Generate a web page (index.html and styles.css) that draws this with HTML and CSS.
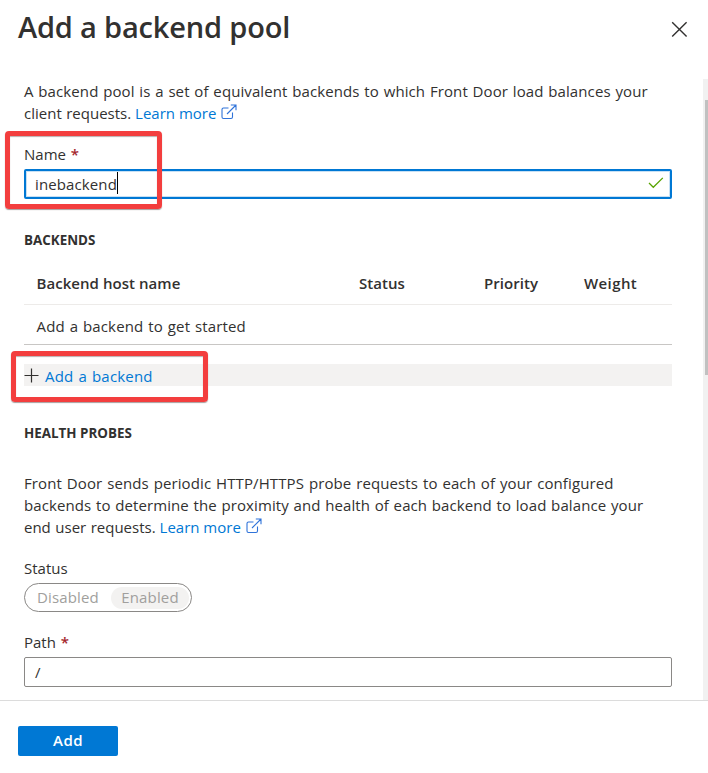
FILE: index.html
```html
<!DOCTYPE html>
<html lang="en">
<head>
<meta charset="utf-8">
<title>Add a backend pool</title>
<link rel="stylesheet" href="styles.css">
</head>
<body>
<div class="panel">
  <header class="header">
    <h1 class="title">Add a backend pool</h1>
    <svg class="close" width="17" height="17" viewBox="0 0 17 17"><path d="M1.2 1.2L15.6 15.6M15.6 1.2L1.2 15.6"/></svg>
  </header>
  <main class="body">
    <div class="content">
      <p class="text intro"><span class="l1">A backend pool is a set of equivalent backends to which Front Door load balances your</span><br><span class="l2">client requests.</span> <a class="link">Learn more<svg class="ext" width="16" height="16" viewBox="0 0 16 16"><path d="M7.500 4H2.500Q1 4 1 5.500V13Q1 14.500 2.500 14.500H10Q11.500 14.500 11.500 13V8.500M6 10L15 1M9.800 1H15V6.200"/></svg></a></p>
      <div class="field name-field">
        <label class="label">Name <span class="req">*</span></label>
        <div class="input focused"><span class="value name-value">inebackend</span><i class="caret"></i><svg class="check" width="16" height="12" viewBox="0 0 16 12"><path d="M1 6L5.300 10.300L14.800 .9"/></svg></div>
        <div class="callout callout-name"></div>
      </div>
      <h2 class="section backends">BACKENDS</h2>
      <div class="table">
        <div class="row head"><span>Backend host name</span><span>Status</span><span>Priority</span><span class="c-weight">Weight</span></div>
        <div class="row empty"><span class="c-empty">Add a backend to get started</span></div>
      </div>
      <div class="add-row">
        <svg class="plus" width="15" height="15" viewBox="0 0 15 15"><path d="M7.500 .5V14.500M.5 7.500H14.500"/></svg><a class="link add-link">Add a backend</a>
        <div class="callout callout-add"></div>
      </div>
      <h2 class="section probes">HEALTH PROBES</h2>
      <p class="text probe-text"><span class="p1">Front Door sends periodic HTTP/HTTPS probe requests to each of your configured</span><br><span class="p2">backends to determine the proximity and health of each backend to load balance your</span><br><span class="l2">end user requests.</span> <a class="link">Learn more<svg class="ext" width="16" height="16" viewBox="0 0 16 16"><path d="M7.500 4H2.500Q1 4 1 5.500V13Q1 14.500 2.500 14.500H10Q11.500 14.500 11.500 13V8.500M6 10L15 1M9.800 1H15V6.200"/></svg></a></p>
      <label class="label status-label">Status</label>
      <div class="toggle"><span class="opt">Disabled</span><span class="opt on">Enabled</span></div>
      <label class="label path-label">Path <span class="req">*</span></label>
      <div class="input path-input"><span class="value">/</span></div>
    </div>
    <div class="scrollbar"><div class="thumb"></div></div>
  </main>
  <footer class="footer"><button class="btn">Add</button></footer>
</div>
</body>
</html>
```

FILE: styles.css
```css
* { box-sizing: border-box; }
body { margin: 0; background: #fff; color: #323130; font: 15px/22px "Open Sans", "Noto Sans", sans-serif; overflow: hidden; }
h1, h2, p { margin: 0; }
.panel { display: flex; flex-direction: column; width: 708px; height: 773px; }
.header { display: flex; justify-content: space-between; height: 79px; padding: 7px 20px 0 18px; }
.title { font-size: 29px; line-height: 40px; font-weight: 600; letter-spacing: -.18px; white-space: nowrap; }
.close { margin-top: 14px; fill: none; stroke: #323130; stroke-width: 1.4; }
.body { display: flex; height: 621px; overflow: hidden; }
.content { display: flex; flex-direction: column; width: 703px; padding: 1px 31px 0 24px; }
.text { white-space: nowrap; line-height: 22px; }
.l1 { letter-spacing: .1px; word-spacing: .75px; }
.p1 { letter-spacing: .1px; word-spacing: .9px; }
.p2 { letter-spacing: .1px; word-spacing: .65px; }
.l2 { word-spacing: .6px; }
.link { color: #0078d4; }
.ext { margin-left: 5px; vertical-align: -1px; fill: none; stroke: #2f73d9; stroke-width: 1.1; }
.field { position: relative; margin-top: 19px; }
.label { display: block; height: 22px; white-space: nowrap; }
.req { margin-left: 1px; color: #a4262c; font-weight: 600; }
.input { display: flex; align-items: center; height: 30px; border: 1px solid #8a8886; border-radius: 2px; padding: 0 8px 0 10px; }
.field .input { margin-top: 4px; }
.focused { border: 2px solid #0078d4; box-shadow: inset 0 0 0 1px #c7e0f4; padding: 0 6px 0 9px; }
.name-value { letter-spacing: .12px; }
.caret { width: 1px; height: 22px; margin-top: -2px; background: #000; }
.check { margin-left: auto; margin-top: -2px; fill: none; stroke: #57a300; stroke-width: 1.3; }
.callout { position: absolute; border: 4px solid #f33e3e; border-radius: 4px; box-shadow: 0 1px 1px rgba(80,60,60,.5), inset 0 1px 1px rgba(80,60,60,.4); }
.callout-name { left: -19px; top: -12px; width: 157px; height: 78px; border-width: 5px; }
.callout-add { left: -13px; top: -13px; width: 197px; height: 51px; border-width: 5px; }
.section { font-size: 13.4px; line-height: 20px; font-weight: 700; white-space: nowrap; }
.backends { margin-top: 31px; }
.table { margin-top: 13px; }
.row { display: grid; grid-template-columns: 322.5px 125px 100px 1fr; padding-left: 12.5px; align-items: center; white-space: nowrap; }
.head { height: 42px; padding-bottom: 2px; border-bottom: 1px solid #edebe9; font-weight: 600; letter-spacing: .05px; }
.c-weight { letter-spacing: .4px; }
.empty { height: 40px; border-bottom: 1px solid #c8c6c4; padding-top: 3px; }
.c-empty { letter-spacing: .15px; word-spacing: .8px; }
.add-row { position: relative; display: flex; align-items: center; height: 22px; margin-top: 19px; background: #f3f2f1; }
.plus { margin-top: 1px; fill: none; stroke: #323130; stroke-width: 1.2; }
.add-link { margin: 2px 0 0 6px; letter-spacing: .2px; word-spacing: .9px; }
.probes { margin-top: 37px; }
.probe-text { margin-top: 29px; }
.status-label { margin-top: 19px; }
.toggle { display: flex; align-items: center; width: 168px; height: 29px; margin-top: 4px; padding: 0 2px; border: 1px solid #8a8886; border-radius: 15px; color: #a19f9d; }
.opt { display: flex; align-items: center; justify-content: center; width: 84px; height: 22px; padding: 0 2px 2px 0; border-radius: 11px; letter-spacing: .15px; }
.on { width: 78px; padding-right: 0; background: #f3f2f1; }
.path-label { margin-top: 19px; margin-bottom: 4px; }
.scrollbar { width: 5px; padding: 21px 0 0 2px; background: #f1f1f1; }
.thumb { width: 3px; height: 275px; background: #c1c1c1; }
.footer { height: 73px; border-top: 1px solid #dcdcdc; padding: 25px 18px 0; }
.btn { display: block; width: 100px; height: 30px; padding: 0 0 2px; border: 0; border-radius: 2px; background: #0078d4; color: #fff; font: 600 15px/28px "Open Sans", sans-serif; letter-spacing: .4px; }
```
